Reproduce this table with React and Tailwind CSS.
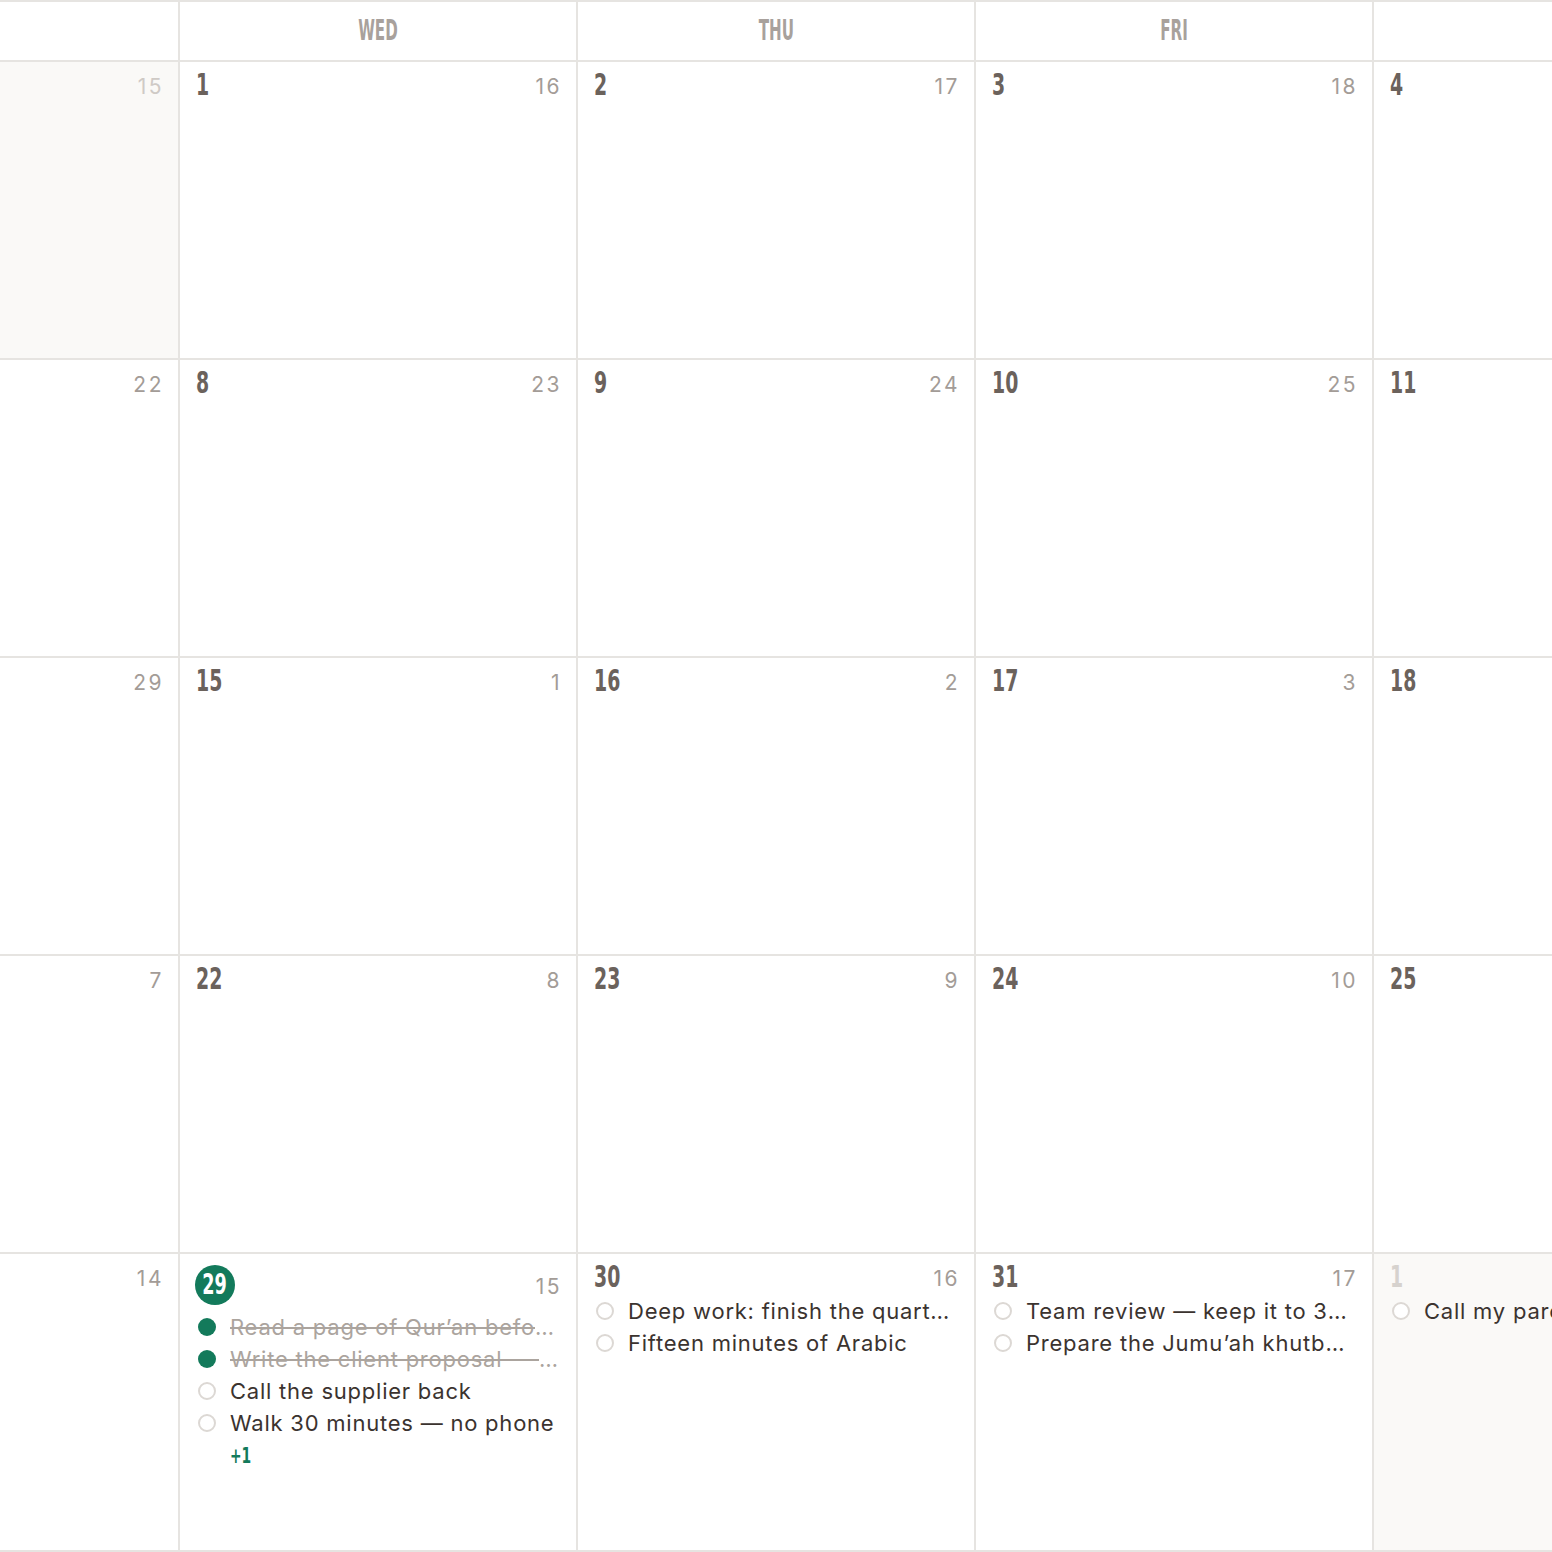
import React from 'react';

const numFont = { fontFamily: '"DejaVu Sans Condensed", "DejaVu Sans", sans-serif' };
const bodyFont = { fontFamily: 'Inter, "Noto Sans", sans-serif' };

const weekdays = ['TUE', 'WED', 'THU', 'FRI', 'SAT'];

const weeks = [
  [
    { day: 30, hijri: 15, muted: true },
    { day: 1, hijri: 16 },
    { day: 2, hijri: 17 },
    { day: 3, hijri: 18 },
    { day: 4, hijri: 19 },
  ],
  [
    { day: 7, hijri: 22 },
    { day: 8, hijri: 23 },
    { day: 9, hijri: 24 },
    { day: 10, hijri: 25 },
    { day: 11, hijri: 26 },
  ],
  [
    { day: 14, hijri: 29 },
    { day: 15, hijri: 1 },
    { day: 16, hijri: 2 },
    { day: 17, hijri: 3 },
    { day: 18, hijri: 4 },
  ],
  [
    { day: 21, hijri: 7 },
    { day: 22, hijri: 8 },
    { day: 23, hijri: 9 },
    { day: 24, hijri: 10 },
    { day: 25, hijri: 11 },
  ],
  [
    { day: 28, hijri: 14 },
    {
      day: 29,
      hijri: 15,
      today: true,
      more: 1,
      tasks: [
        { title: 'Read a page of Qur’an before Fajr', done: true },
        { title: 'Write the client proposal — first draft', done: true },
        { title: 'Call the supplier back' },
        { title: 'Walk 30 minutes — no phone' },
      ],
    },
    {
      day: 30,
      hijri: 16,
      tasks: [
        { title: 'Deep work: finish the quarterly report' },
        { title: 'Fifteen minutes of Arabic' },
      ],
    },
    {
      day: 31,
      hijri: 17,
      tasks: [
        { title: 'Team review — keep it to 30 minutes' },
        { title: 'Prepare the Jumu’ah khutbah notes' },
      ],
    },
    {
      day: 1,
      hijri: 18,
      muted: true,
      tasks: [{ title: 'Call my parents' }],
    },
  ],
];

function Task({ task }) {
  return (
    <div className="flex items-center h-[32px] gap-[14px] ml-[2px] min-w-0">
      {task.done ? (
        <span className="shrink-0 w-[18px] h-[18px] rounded-full bg-[#137a5b]" />
      ) : (
        <span className="shrink-0 w-[18px] h-[18px] rounded-full border-2 border-[#dcd8d4] bg-white" />
      )}
      <span
        style={bodyFont}
        className={`truncate text-[22px] tracking-[0.035em] leading-[32px] ${
          task.done ? 'line-through text-[#aba49e] decoration-[#aba49e]' : 'text-[#3b332f]'
        }`}
      >
        {task.title}
      </span>
    </div>
  );
}

function DayCell({ cell }) {
  return (
    <div className={`flex flex-col min-w-0 px-4 pt-[11px] ${cell.muted ? 'bg-[#faf9f7]' : 'bg-white'}`}>
      <div className="flex items-center justify-between">
        {cell.today ? (
          <span className="flex items-center justify-center w-[40px] h-[40px] -ml-[1px] rounded-full bg-[#137a5b]">
            <span
              style={numFont}
              className="inline-block text-white font-bold text-[28px] leading-none scale-x-[0.7]"
            >
              {cell.day}
            </span>
          </span>
        ) : (
          <span
            style={numFont}
            className={`inline-block origin-left scale-x-[0.7] font-bold text-[30px] leading-[24px] ${
              cell.muted ? 'text-[#d6d2ce]' : 'text-[#6b625c]'
            }`}
          >
            {cell.day}
          </span>
        )}
        <span
          style={bodyFont}
          className={`translate-y-[2px] text-[21px] tracking-[0.12em] leading-[24px] -mr-[2px] ${
            cell.muted ? 'text-[#cfcac6]' : 'text-[#a39c97]'
          }`}
        >
          {cell.hijri}
        </span>
      </div>
      {cell.tasks && (
        <div className="flex flex-col mt-[6px] min-w-0">
          {cell.tasks.map((t, i) => (
            <Task key={i} task={t} />
          ))}
          {cell.more && (
            <span
              style={numFont}
              className="inline-block self-start origin-left scale-x-[0.7] ml-[34px] mt-[3px] text-[22px] font-bold text-[#137a5b] leading-[28px]"
            >
              +{cell.more}
            </span>
          )}
        </div>
      )}
    </div>
  );
}

export default function App() {
  return (
    <div className="w-[1552px] h-[1552px] overflow-hidden bg-white">
      <div className="w-[1990px] -ml-[220px] grid grid-cols-[repeat(5,396px)] grid-rows-[58px_repeat(5,296px)] gap-[2px] py-[2px] pl-[2px] bg-[#e6e4e1]">
        {weekdays.map((w) => (
          <div key={w} className="bg-white flex items-center justify-center">
            <span
              style={numFont}
              className="inline-block font-bold text-[28px] leading-none text-[#a8a19c] scale-x-[0.6]"
            >
              {w}
            </span>
          </div>
        ))}
        {weeks.map((week, wi) =>
          week.map((cell, ci) => <DayCell key={`${wi}-${ci}`} cell={cell} />)
        )}
      </div>
    </div>
  );
}
